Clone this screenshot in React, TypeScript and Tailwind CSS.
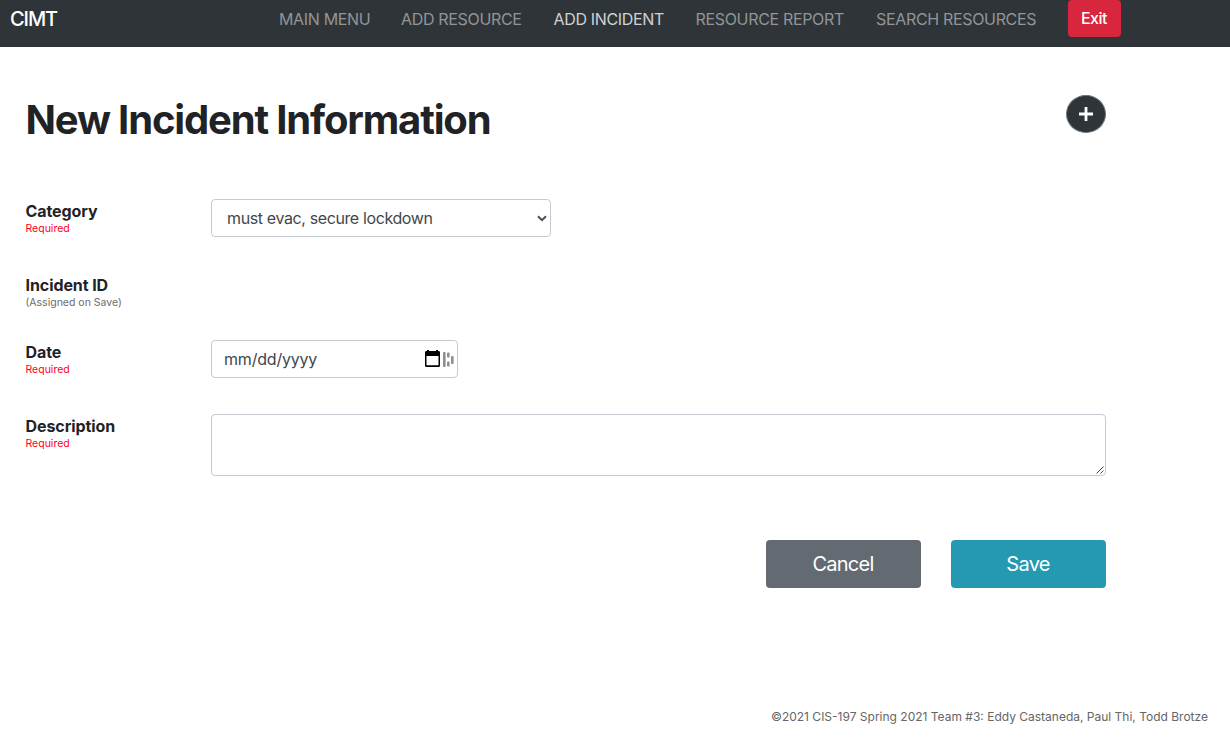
import type { ReactNode } from "react";

const NAV = [
  { label: "MAIN MENU", box: "w-[90px]" },
  { label: "ADD RESOURCE", box: "w-[120.5px]" },
  { label: "ADD INCIDENT", box: "w-[110px]", active: true },
  { label: "RESOURCE REPORT", box: "w-[148.5px]" },
  { label: "SEARCH RESOURCES", box: "w-[160px]" },
];

function FormRow({ label, hint, required, className, children }: {
  label: string;
  hint: string;
  required?: boolean;
  className: string;
  children?: ReactNode;
}) {
  return (
    <div className={`flex ${className}`}>
      <div className="w-[185.5px] shrink-0">
        <div className="text-[16px] leading-6 font-bold tracking-[-0.08px]">{label}</div>
        <div className={`text-[10.5px] leading-[12px] ${required ? "text-[#ff0019]" : "text-[#6c6c6c]"}`}>{hint}</div>
      </div>
      {children}
    </div>
  );
}

function PlusIcon() {
  return (
    <svg width="16" height="16" viewBox="0 0 16 16" fill="#fff">
      <path d="M6.6 1h2.8v5.6H15v2.8H9.4V15H6.6V9.4H1V6.6h5.6z" />
    </svg>
  );
}

function ChevronIcon() {
  return (
    <svg width="10" height="7" viewBox="0 0 10 7" fill="none" stroke="#495057" strokeWidth="2">
      <path d="M1 1.2l4 4 4-4" />
    </svg>
  );
}

function CalendarIcon() {
  return (
    <svg width="15" height="17" viewBox="0 0 15 17" fill="#000">
      <path fillRule="evenodd" d="M2 0h2v1h7V0h2v1h.6Q15 1 15 2.4v13Q15 17 13.6 17H1.4Q0 17 0 15.4v-13Q0 1 1.4 1H2zM1.5 6v9.3h12V6z" />
    </svg>
  );
}

function BarsIcon() {
  return (
    <svg width="11" height="15" viewBox="0 0 11 15" fill="#8e8e8e">
      <rect x="0" y="0" width="2.6" height="15" rx="1" />
      <rect x="4" y="0.5" width="2.6" height="5" rx="1" />
      <rect x="4" y="9.5" width="2.6" height="5" rx="1" />
      <rect x="8" y="4" width="2.6" height="8" rx="1" />
    </svg>
  );
}

function ResizeGrip() {
  return (
    <svg width="8" height="8" viewBox="0 0 8 8" stroke="#444" strokeWidth="1" fill="none">
      <path d="M0.5 7.5l7-7M4.5 7.5l3-3" />
    </svg>
  );
}

export default function App() {
  return (
    <div className="flex h-[740px] w-[1230px] flex-col overflow-hidden bg-white font-['Inter',sans-serif] text-[#1f2326]">
      <nav className="flex h-[47px] shrink-0 items-start bg-[#2f3438] pl-[10px]">
        <div className="w-[269px] pt-[4px] text-[20px] leading-[30px] font-[450] tracking-[-1.1px] text-white">CIMT</div>
        <div className="flex gap-8 pt-[7px] text-[16px] leading-6 tracking-[-0.33px]">
          {NAV.map((item) => (
            <a key={item.label} className={`whitespace-nowrap ${item.box} ${item.active ? "text-[#d0d2d3]" : "text-[#929597]"}`}>
              {item.label}
            </a>
          ))}
        </div>
        <button className="ml-8 h-[37px] w-[53px] rounded-[4px] pb-px bg-[#d7263d] pr-[1px] text-[16px] leading-6 font-[450] tracking-[-0.5px] text-white">Exit</button>
      </nav>

      <main className="flex w-[1106px] flex-col pl-[25.5px]">
        <header className="flex h-[152px] items-start justify-between pt-[48px]">
          <h1 className="pt-px text-[40px] leading-[48px] font-bold tracking-[-1.16px]">New Incident Information</h1>
          <button className="flex h-[38px] w-[40px] items-center justify-center rounded-[50%] border border-[#6c757d] bg-[#2f3438]">
            <PlusIcon />
          </button>
        </header>

        <FormRow label="Category" hint="Required" required className="h-[74px]">
          <div className="flex h-[38px] w-[340px] items-center justify-between rounded-[4px] border border-[#c6cad3] pr-[3px] pl-[15px] text-[16px] tracking-[-0.38px] text-[#41474d]">
            <span>must evac, secure lockdown</span>
            <ChevronIcon />
          </div>
        </FormRow>
        <FormRow label="Incident ID" hint="(Assigned on Save)" className="h-[67px]" />
        <FormRow label="Date" hint="Required" required className="h-[74px]">
          <div className="flex h-[38px] w-[247px] items-center rounded-[4px] border border-[#c6cad3] pr-[3px] pl-[12px] text-[16px] tracking-[-0.2px] text-[#41474d]">
            <span className="flex-1">mm/dd/yyyy</span>
            <span className="-mt-[2px]"><CalendarIcon /></span>
            <span className="w-[3px]" />
            <BarsIcon />
          </div>
        </FormRow>
        <FormRow label="Description" hint="Required" required className="h-[126px]">
          <div className="flex h-[62px] w-[895px] items-end justify-end rounded-[4px] border border-[#c6cad3] p-px">
            <ResizeGrip />
          </div>
        </FormRow>

        <div className="flex justify-end gap-[30px] text-[20px] tracking-[-0.75px] text-white">
          <button className="h-12 w-[155px] rounded-[4px] bg-[#636a71] pr-px">Cancel</button>
          <button className="h-12 w-[155px] rounded-[4px] bg-[#2499b1] pr-px">Save</button>
        </div>
      </main>

      <footer className="mt-auto flex justify-end pr-[22px] pb-[14px] text-[12px] leading-[18px] text-[#666]">
        ©2021 CIS-197 Spring 2021 Team #3: Eddy Castaneda, Paul Thi, Todd Brotze
      </footer>
    </div>
  );
}
